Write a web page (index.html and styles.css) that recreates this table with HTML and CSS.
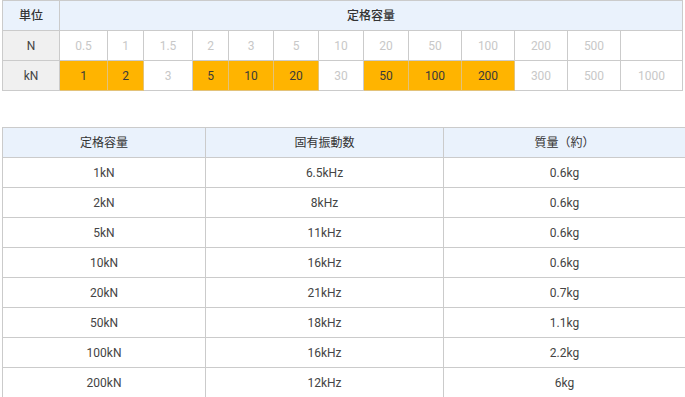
FILE: index.html
```html
<!DOCTYPE html>
<html lang="ja">
<head>
<meta charset="utf-8">
<link rel="stylesheet" href="styles.css">
</head>
<body>
<div class="page">
  <table class="range">
    <colgroup>
      <col class="c57"><col class="c48"><col class="c36"><col class="c49"><col class="c36">
      <col class="c45"><col class="c45"><col class="c45"><col class="c45">
      <col class="c53"><col class="c53"><col class="c53"><col class="c53"><col class="c62">
    </colgroup>
    <tr class="head">
      <th class="unit">単位</th>
      <th colspan="13">定格容量</th>
    </tr>
    <tr>
      <td class="unit">N</td>
      <td class="off">0.5</td><td class="off">1</td><td class="off">1.5</td><td class="off">2</td>
      <td class="off">3</td><td class="off">5</td><td class="off">10</td><td class="off">20</td>
      <td class="off">50</td><td class="off">100</td><td class="off">200</td><td class="off">500</td>
      <td class="off"></td>
    </tr>
    <tr>
      <td class="unit">kN</td>
      <td class="on">1</td><td class="on">2</td><td class="off">3</td><td class="on">5</td>
      <td class="on">10</td><td class="on">20</td><td class="off">30</td><td class="on">50</td>
      <td class="on">100</td><td class="on">200</td><td class="off">300</td><td class="off">500</td>
      <td class="off">1000</td>
    </tr>
  </table>

  <table class="spec">
    <colgroup>
      <col class="s1"><col class="s2"><col class="s3">
    </colgroup>
    <tr class="head">
      <th>定格容量</th><th>固有振動数</th><th>質量（約）</th>
    </tr>
    <tr><td>1kN</td><td>6.5kHz</td><td>0.6kg</td></tr>
    <tr><td>2kN</td><td>8kHz</td><td>0.6kg</td></tr>
    <tr><td>5kN</td><td>11kHz</td><td>0.6kg</td></tr>
    <tr><td>10kN</td><td>16kHz</td><td>0.6kg</td></tr>
    <tr><td>20kN</td><td>21kHz</td><td>0.7kg</td></tr>
    <tr><td>50kN</td><td>18kHz</td><td>1.1kg</td></tr>
    <tr><td>100kN</td><td>16kHz</td><td>2.2kg</td></tr>
    <tr><td>200kN</td><td>12kHz</td><td>6kg</td></tr>
  </table>
</div>
</body>
</html>
```

FILE: styles.css
```css
html, body {
  margin: 0;
  padding: 0;
  background: #ffffff;
}

body {
  font-family: Roboto, "Noto Sans CJK JP", sans-serif;
  font-size: 12px;
  color: #333333;
}

.page {
  padding: 0 0 0 2px;
  display: flex;
  flex-direction: column;
  gap: 36px;
}

table {
  border-collapse: collapse;
  table-layout: fixed;
}

th, td {
  border: 1px solid #cbcbcb;
  text-align: center;
  padding: 0;
  height: 30px;
  line-height: 16px;
  box-sizing: border-box;
}

.head th {
  background: #eaf2fc;
  font-weight: 500;
  color: #333333;
}

.range {
  width: 681px;
}

.range .unit {
  background: #f0f0f0;
  font-weight: 400;
  color: #444444;
}

.range .head th.unit {
  background: #eaf2fc;
  font-weight: 500;
  color: #333333;
}

.range .off {
  color: #c8c8c8;
}

.range .on {
  background: #ffb400;
  color: #3a3a3a;
  border-color: #e2c27a;
}

.c57 { width: 57px; }
.c48 { width: 48px; }
.c36 { width: 36px; }
.c49 { width: 49px; }
.c45 { width: 45px; }
.c53 { width: 53px; }
.c62 { width: 62px; }

.spec {
  width: 683px;
}

.spec .head th {
  font-weight: 400;
}

.spec td {
  color: #444444;
}

.s1 { width: 203px; }
.s2 { width: 238px; }
.s3 { width: 242px; }
```
